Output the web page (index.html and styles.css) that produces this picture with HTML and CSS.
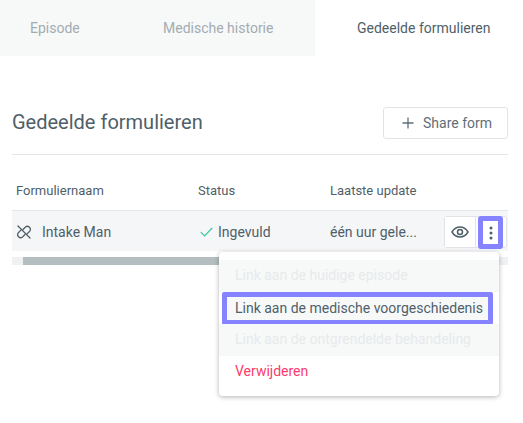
FILE: index.html
```html
<!DOCTYPE html>
<html lang="nl">
<head>
    <meta charset="UTF-8">
    <meta name="viewport" content="width=device-width, initial-scale=1.0">
    <title>Gedeelde formulieren</title>
    <link rel="stylesheet" href="styles.css">
</head>
<body>
    <nav class="tabs">
        <div class="tab tab-episode">Episode</div>
        <div class="tab tab-history">Medische historie</div>
        <div class="tab tab-active">Gedeelde formulieren</div>
    </nav>

    <main class="content">
        <div class="title-row">
            <h1>Gedeelde formulieren</h1>
            <button class="share-button">
                <svg width="12" height="12" viewBox="0 0 12 12"><path d="M6 .5v11M.5 6h11" stroke="#5f6f78" stroke-width="1.3" fill="none"/></svg>
                Share form
            </button>
        </div>

        <div class="table-head">
            <div class="col-name">Formuliernaam</div>
            <div class="col-status">Status</div>
            <div class="col-update">Laatste update</div>
        </div>

        <div class="table-row">
            <div class="col-name name-cell">
                <svg class="unlink-icon" width="16" height="16" viewBox="0 0 16 16" fill="none" stroke="#4f5f69" stroke-width="1.3" stroke-linecap="round">
                    <path d="M7 5.5 9.5 3a3 3 0 0 1 4.2 4.2L11 9.9"/>
                    <path d="M9 10.5 6.500 13a3 3 0 0 1-4.200-4.200L5 6.100"/>
                    <path d="M2 2l12 12"/>
                </svg>
                Intake Man
            </div>
            <div class="col-status status-cell">
                <svg width="13" height="10" viewBox="0 0 13 10" fill="none"><path d="M.8 5.200l3.800 3.800L12.200 1" stroke="#2fc7a0" stroke-width="1.100"/></svg>
                Ingevuld
            </div>
            <div class="col-update">één uur gele...</div>
            <div class="row-actions">
                <button class="eye-button">
                    <svg width="18" height="12" viewBox="0 0 18 12" fill="none" stroke="#4f5f69" stroke-width="1.500"><path d="M1 6c2-3.300 4.700-5 8-5s6 1.700 8 5c-2 3.300-4.700 5-8 5s-6-1.700-8-5z"/><circle cx="9" cy="6" r="2.500"/></svg>
                </button>
                <button class="more-button">
                    <svg width="4" height="14" viewBox="0 0 4 14" fill="#4f5f69"><circle cx="2" cy="2" r="1.500"/><circle cx="2" cy="7" r="1.500"/><circle cx="2" cy="12" r="1.500"/></svg>
                </button>
            </div>
        </div>

        <div class="scrollbar"><div class="scrollbar-thumb"></div></div>

        <div class="action-dropdown">
            <div class="dropdown-item item-disabled">Link aan de huidige episode</div>
            <div class="dropdown-item item-highlight">Link aan de medische voorgeschiedenis</div>
            <div class="dropdown-item item-disabled">Link aan de ontgrendelde behandeling</div>
            <div class="dropdown-item item-danger">Verwijderen</div>
        </div>
    </main>
</body>
</html>
```

FILE: styles.css
```css
body {
    font-family: 'Roboto', sans-serif;
    margin: 0;
    padding: 0;
    background-color: #fff;
    color: #4f5f69;
    font-size: 14px;
    min-height: 423px;
}

.tabs {
    display: flex;
    height: 56px;
}

.tab {
    display: flex;
    align-items: center;
    padding-bottom: 1px;
    background-color: #f7f9f9;
    color: #a3acb1;
    box-sizing: border-box;
}

.tab-episode {
    width: 133px;
    padding-left: 30px;
}

.tab-history {
    width: 182px;
    padding-left: 30px;
}

.tab-active {
    flex: 1;
    padding-left: 42px;
    background-color: #fff;
    color: #4f5f69;
}

.content {
    position: relative;
    height: 367px;
    padding: 51px 15px 0 12px;
    box-sizing: border-box;
}

.title-row {
    display: flex;
    justify-content: space-between;
    align-items: center;
    padding-bottom: 15px;
    border-bottom: 1px solid #e3e6e8;
}

h1 {
    margin: 0 0 2px;
    font-size: 20px;
    font-weight: 400;
}

.share-button {
    display: flex;
    align-items: center;
    gap: 9px;
    width: 125px;
    height: 32px;
    padding: 0 0 0 18px;
    box-sizing: border-box;
    background-color: #fff;
    border: 1px solid #e1e4e6;
    border-radius: 3px;
    font-family: inherit;
    font-size: 14px;
    color: #5f6f78;
}

.table-head {
    display: flex;
    align-items: center;
    height: 56px;
    padding-top: 16px;
    box-sizing: border-box;
    border-bottom: 1px solid #e3e6e8;
    font-size: 13px;
}

.col-name {
    width: 186px;
    padding-left: 4px;
    box-sizing: border-box;
}

.col-status {
    width: 132px;
}

.col-update {
    width: 114px;
}

.table-row {
    display: flex;
    align-items: center;
    height: 40px;
    padding-top: 2px;
    box-sizing: border-box;
    background-color: #f5f6f8;
}

.name-cell {
    display: flex;
    align-items: center;
    gap: 10px;
}

.status-cell {
    display: flex;
    align-items: center;
    gap: 5px;
    padding-left: 2px;
    box-sizing: border-box;
}

.row-actions {
    display: flex;
    width: 63px;
    height: 32px;
    box-sizing: border-box;
    background-color: #fff;
    border: 1px solid #e1e4e6;
    border-radius: 3px;
}

.eye-button {
    display: flex;
    align-items: center;
    justify-content: center;
    width: 31px;
    height: 30px;
    padding: 0;
    background-color: #fff;
    border: none;
    border-right: 1px solid #e1e4e6;
}

.more-button {
    display: flex;
    align-items: center;
    justify-content: center;
    flex-shrink: 0;
    width: 25px;
    height: 33px;
    margin: -1px 0 0 2px;
    padding: 0;
    box-sizing: border-box;
    background-color: #fff;
    border: 5px solid #8583ff;
    border-radius: 3px;
}

.scrollbar {
    height: 8px;
    margin-top: 6px;
    background-color: #eff1f2;
}

.scrollbar-thumb {
    width: 430px;
    height: 8px;
    margin-left: 11px;
    background-color: #b4bec1;
}

.action-dropdown {
    position: absolute;
    top: 196px;
    left: 219px;
    width: 280px;
    padding: 8px 0;
    box-sizing: border-box;
    background-color: #fff;
    border-radius: 4px;
    box-shadow: 0 1px 5px rgba(0, 0, 0, 0.3);
}

.dropdown-item {
    display: flex;
    align-items: center;
    height: 32px;
    padding-bottom: 2px;
    padding-left: 16px;
    box-sizing: border-box;
    background-color: #f7f9f9;
}

.item-disabled {
    color: #e7eaeb;
}

.item-highlight {
    width: 271px;
    height: 33px;
    margin-bottom: -1px;
    margin-left: 3px;
    padding-left: 8px;
    border: 5px solid #8583ff;
    border-radius: 2px;
}

.item-danger {
    background-color: #fff;
    color: #fb3a6e;
}
```
